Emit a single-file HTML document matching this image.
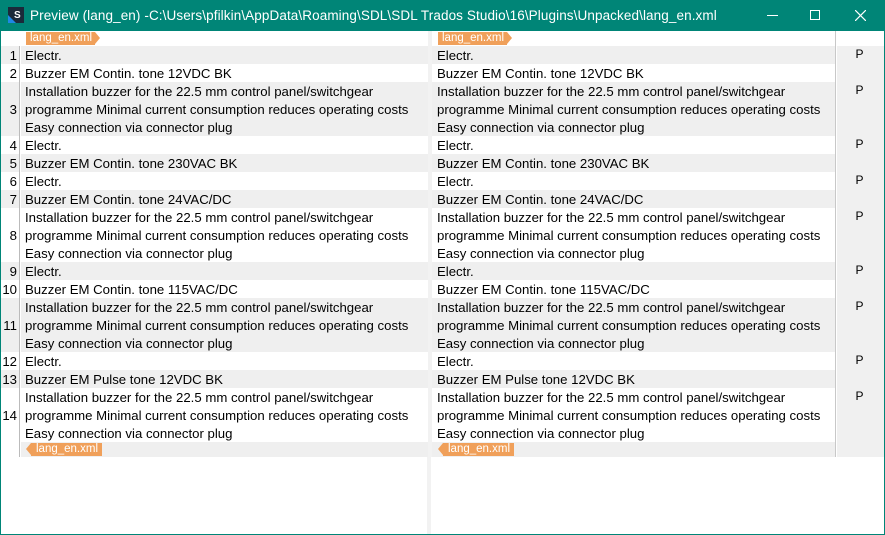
<!DOCTYPE html><html><head><style>
*{margin:0;padding:0;box-sizing:border-box}
body{width:885px;height:535px;overflow:hidden;background:#fff;font-family:"Liberation Sans",Arial,sans-serif;position:relative}
#win{position:absolute;left:0;top:0;width:885px;height:535px;border:1px solid #008577;border-top:none}
#title{position:absolute;left:0;top:0;width:885px;height:31px;background:#008577;color:#fff;font-size:13.5px}
#title .t{position:absolute;left:30px;top:8px;white-space:nowrap;letter-spacing:0.1px}
.row{position:absolute;left:1px;width:883px;font-size:13.2px;color:#000}
.row div{position:absolute;top:0;height:100%}
.num{left:0;width:19px;border-right:1px solid #bbb;text-align:right;padding-right:2px;padding-top:1px;display:flex;align-items:center;justify-content:flex-end}
.l{left:20px;width:407px;padding-left:4px;line-height:18px;padding-top:1px}
.gap{left:427px;width:4px;background:#f2f2f2}
.r{left:431px;width:404px;padding-left:5px;line-height:18px;padding-top:1px;border-right:1px solid #c8c8c8}
.s{left:836px;width:47px;background:#f0f0f0;text-align:center;line-height:16px;font-size:12px;padding-right:2px}
.g .num,.g .l,.g .r{background:#efefef}
.tag{position:absolute;height:13px;background:#f0a05a;color:#fff;font-size:11.5px;line-height:13px;padding:0 4px}
</style></head><body>
<div id="title">
<svg style="position:absolute;left:8px;top:7px" width="16" height="16"><rect width="16" height="16" fill="#1b2a3a"/><polygon points="0,8 8,16 0,16" fill="#1e88e5"/><text x="6" y="11" fill="#fff" font-size="10" font-family="Liberation Sans" font-weight="bold">S</text></svg>
<span class="t">Preview (lang_en) -C:\Users\pfilkin\AppData\Roaming\SDL\SDL Trados Studio\16\Plugins\Unpacked\lang_en.xml</span>
<div style="position:absolute;left:767px;top:15px;width:11px;height:1px;background:#fff"></div>
<div style="position:absolute;left:810px;top:10px;width:10px;height:10px;border:1px solid #fff"></div>
<svg style="position:absolute;left:855px;top:10px" width="11" height="11"><path d="M0 0L11 11M11 0L0 11" stroke="#fff" stroke-width="1.2"/></svg>
</div>
<div id="win"></div>
<div class="row" style="top:31px;height:15px"><div class="num" style="border:none"></div><div class="l"></div><div class="gap"></div><div class="r"></div><div class="s" style="background:#fff"></div></div>
<div class="tag" style="left:26px;top:32px;padding-right:3px">lang_en.xml<span style="position:absolute;right:-5px;top:0;border-left:5px solid #f0a05a;border-top:6.5px solid transparent;border-bottom:6.5px solid transparent"></span></div>
<div class="tag" style="left:438px;top:32px;padding-right:3px">lang_en.xml<span style="position:absolute;right:-5px;top:0;border-left:5px solid #f0a05a;border-top:6.5px solid transparent;border-bottom:6.5px solid transparent"></span></div>

<div class="row g" style="top:46px;height:18px"><div class="num">1</div><div class="l">Electr.</div><div class="gap"></div><div class="r">Electr.</div><div class="s">P</div></div>
<div class="row" style="top:64px;height:18px"><div class="num">2</div><div class="l">Buzzer EM Contin. tone 12VDC BK</div><div class="gap"></div><div class="r">Buzzer EM Contin. tone 12VDC BK</div><div class="s"></div></div>
<div class="row g" style="top:82px;height:54px"><div class="num">3</div><div class="l">Installation buzzer for the 22.5 mm control panel/switchgear<br>programme Minimal current consumption reduces operating costs<br>Easy connection via connector plug</div><div class="gap"></div><div class="r">Installation buzzer for the 22.5 mm control panel/switchgear<br>programme Minimal current consumption reduces operating costs<br>Easy connection via connector plug</div><div class="s">P</div></div>
<div class="row" style="top:136px;height:18px"><div class="num">4</div><div class="l">Electr.</div><div class="gap"></div><div class="r">Electr.</div><div class="s">P</div></div>
<div class="row g" style="top:154px;height:18px"><div class="num">5</div><div class="l">Buzzer EM Contin. tone 230VAC BK</div><div class="gap"></div><div class="r">Buzzer EM Contin. tone 230VAC BK</div><div class="s"></div></div>
<div class="row" style="top:172px;height:18px"><div class="num">6</div><div class="l">Electr.</div><div class="gap"></div><div class="r">Electr.</div><div class="s">P</div></div>
<div class="row g" style="top:190px;height:18px"><div class="num">7</div><div class="l">Buzzer EM Contin. tone 24VAC/DC</div><div class="gap"></div><div class="r">Buzzer EM Contin. tone 24VAC/DC</div><div class="s"></div></div>
<div class="row" style="top:208px;height:54px"><div class="num">8</div><div class="l">Installation buzzer for the 22.5 mm control panel/switchgear<br>programme Minimal current consumption reduces operating costs<br>Easy connection via connector plug</div><div class="gap"></div><div class="r">Installation buzzer for the 22.5 mm control panel/switchgear<br>programme Minimal current consumption reduces operating costs<br>Easy connection via connector plug</div><div class="s">P</div></div>
<div class="row g" style="top:262px;height:18px"><div class="num">9</div><div class="l">Electr.</div><div class="gap"></div><div class="r">Electr.</div><div class="s">P</div></div>
<div class="row" style="top:280px;height:18px"><div class="num">10</div><div class="l">Buzzer EM Contin. tone 115VAC/DC</div><div class="gap"></div><div class="r">Buzzer EM Contin. tone 115VAC/DC</div><div class="s"></div></div>
<div class="row g" style="top:298px;height:54px"><div class="num">11</div><div class="l">Installation buzzer for the 22.5 mm control panel/switchgear<br>programme Minimal current consumption reduces operating costs<br>Easy connection via connector plug</div><div class="gap"></div><div class="r">Installation buzzer for the 22.5 mm control panel/switchgear<br>programme Minimal current consumption reduces operating costs<br>Easy connection via connector plug</div><div class="s">P</div></div>
<div class="row" style="top:352px;height:18px"><div class="num">12</div><div class="l">Electr.</div><div class="gap"></div><div class="r">Electr.</div><div class="s">P</div></div>
<div class="row g" style="top:370px;height:18px"><div class="num">13</div><div class="l">Buzzer EM Pulse tone 12VDC BK</div><div class="gap"></div><div class="r">Buzzer EM Pulse tone 12VDC BK</div><div class="s"></div></div>
<div class="row" style="top:388px;height:54px"><div class="num">14</div><div class="l">Installation buzzer for the 22.5 mm control panel/switchgear<br>programme Minimal current consumption reduces operating costs<br>Easy connection via connector plug</div><div class="gap"></div><div class="r">Installation buzzer for the 22.5 mm control panel/switchgear<br>programme Minimal current consumption reduces operating costs<br>Easy connection via connector plug</div><div class="s">P</div></div>
<div class="row g" style="top:442px;height:15px"><div class="num" style="background:#fff"></div><div class="l"></div><div class="gap"></div><div class="r"></div><div class="s"></div></div>
<div style="position:absolute;left:427px;top:457px;width:4px;height:77px;background:#f2f2f2"></div>
<div class="tag" style="left:31px;top:443px;padding-left:5px">lang_en.xml<span style="position:absolute;left:-5px;top:0;border-right:5px solid #f0a05a;border-top:6.5px solid transparent;border-bottom:6.5px solid transparent"></span></div>
<div class="tag" style="left:443px;top:443px;padding-left:5px">lang_en.xml<span style="position:absolute;left:-5px;top:0;border-right:5px solid #f0a05a;border-top:6.5px solid transparent;border-bottom:6.5px solid transparent"></span></div>
</body></html>
